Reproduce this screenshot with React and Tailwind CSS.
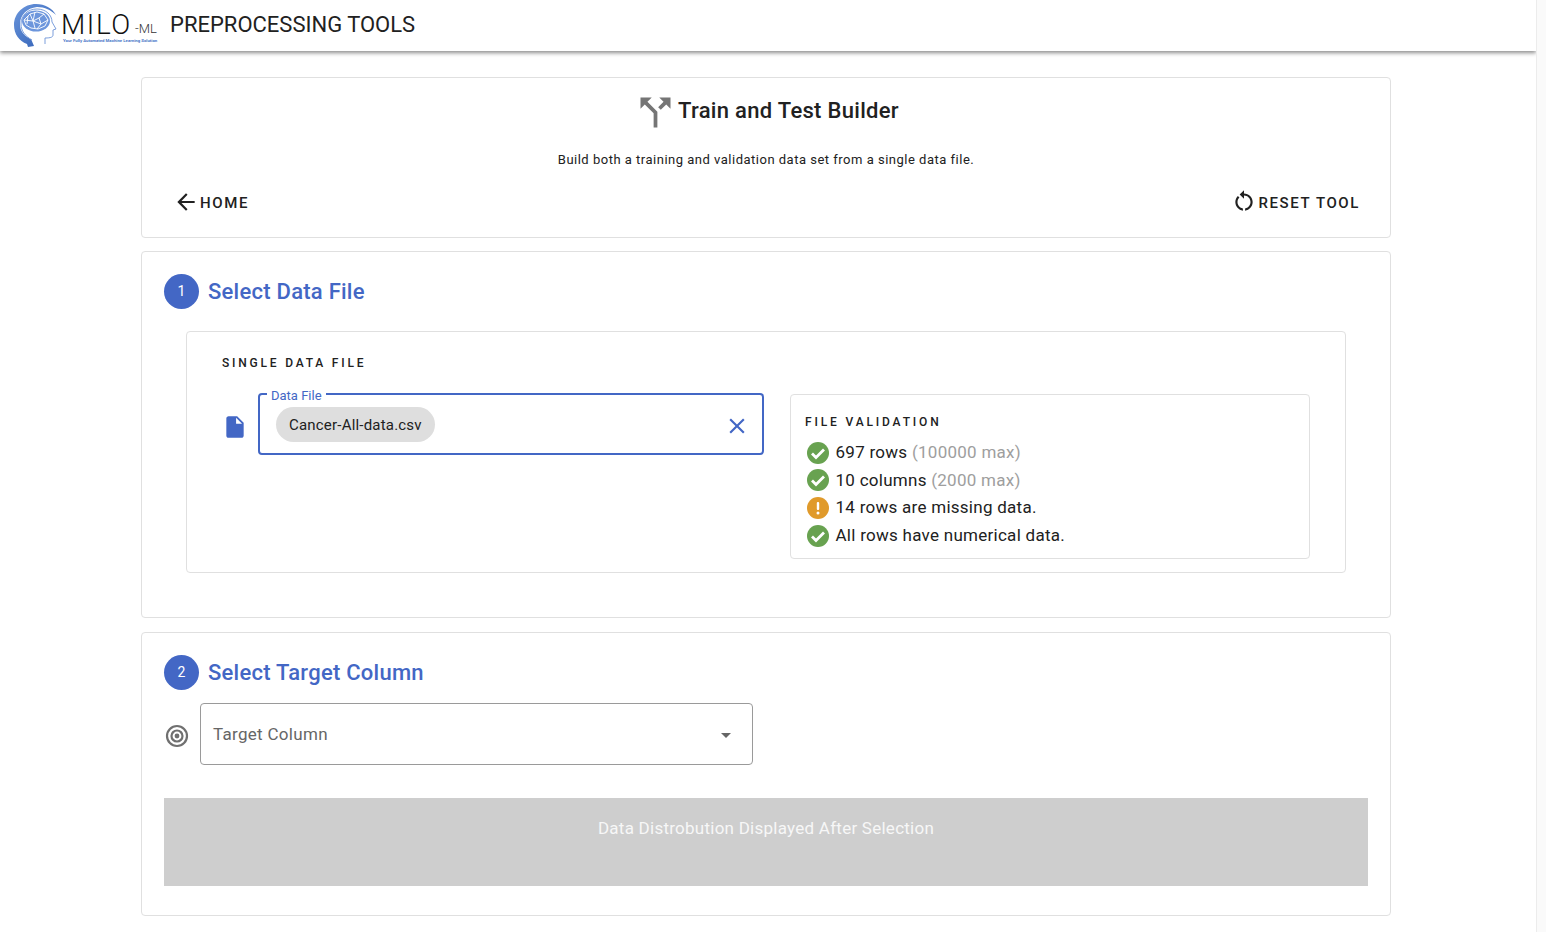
function Icon({ d, className, fill = "currentColor" }) {
    return (
        <svg viewBox="0 0 24 24" className={className} fill={fill}>
            <path d={d} />
        </svg>
    );
}

function Logo() {
    return (
        <div className="relative w-[146px] h-[50px] shrink-0">
            <svg viewBox="0 0 44 44" className="absolute left-[1px] top-[3px] w-[44px] h-[44px]">
                <defs>
                    <linearGradient id="logoBlue" x1="0" y1="0" x2="1" y2="1">
                        <stop offset="0" stopColor="#6c97dd" />
                        <stop offset="1" stopColor="#2c5cb2" />
                    </linearGradient>
                </defs>
                <path
                    d="M42 11C38 4 31 0 22 0 10 0 0 9 0 21c0 9 5 16 13 19l1 3 6-1-3-7C10 32 6 27 6 20 6 11 13 4 23 3c8 0 14 3 19 8z"
                    fill="url(#logoBlue)"
                />
                <path
                    d="M18 36C11 32 7 27 7 20 7 11 14 5 23 5c9 0 15 6 15 13l4 7-3 1 0 5c0 2-2 3-8 3l0 6"
                    fill="#ffffff"
                    stroke="#6d94d8"
                    strokeWidth="0.9"
                />
                <ellipse cx="22" cy="17" rx="14" ry="10.5" fill="#6d96dc" />
                <path
                    d="M10 16l6-6 7-2 7 2 4 6-3 6-7 3-7-1-5-3zM16 10l3 7 6-3 5-4M10 16l9 1 2 7M25 14l2 6 7-4M19 17l8 3-4 5M14 12l-1 8M21 8l-2 9"
                    fill="none"
                    stroke="#ffffff"
                    strokeWidth="0.9"
                />
            </svg>
            <span className="absolute left-[48px] top-[6px] text-[28px] leading-[36px] tracking-[1.6px] text-[#111] font-light">
                MILO
            </span>
            <span className="absolute left-[122px] top-[20px] text-[13px] leading-[16px] text-[#333] font-light whitespace-nowrap">
                -ML
            </span>
            <span className="absolute left-[50px] top-[38px] text-[4.3px] leading-[4px] font-bold text-[#4a78c8] whitespace-nowrap">
                Your Fully Automated Machine Learning Solution
            </span>
        </div>
    );
}

function StepTitle({ number, children }) {
    return (
        <div className="flex items-center gap-[9px]">
            <div className="flex h-[35px] w-[35px] items-center justify-center rounded-full bg-[#4367c5] text-[14px] text-white">
                {number}
            </div>
            <h2 className="h-[36px] pt-[2px] text-[22px] font-medium leading-[34px] tracking-[0.25px] text-[#4367c5]">
                {children}
            </h2>
        </div>
    );
}

function CheckMark({ warn }) {
    if (warn) {
        return (
            <svg viewBox="0 0 22 22" className="h-[22px] w-[22px] shrink-0">
                <circle cx="11" cy="11" r="11" fill="#e09a2b" />
                <rect x="9.8" y="5" width="2.4" height="8" rx="1" fill="#fff" />
                <circle cx="11" cy="16" r="1.5" fill="#fff" />
            </svg>
        );
    }
    return (
        <svg viewBox="0 0 22 22" className="h-[22px] w-[22px] shrink-0">
            <circle cx="11" cy="11" r="11" fill="#68a250" />
            <path d="M5 11.5l4 4 8-8" fill="none" stroke="#fff" strokeWidth="2.8" />
        </svg>
    );
}

const validations = [
    { text: "697 rows", extra: "(100000 max)" },
    { text: "10 columns", extra: "(2000 max)" },
    { text: "14 rows are missing data.", warn: true },
    { text: "All rows have numerical data." },
];

export default function App() {
    return (
        <div className="flex h-[932px] overflow-hidden bg-white font-['Roboto',sans-serif] text-[#212121]">
            <div className="w-[1536px] shrink-0">
                {/* App bar */}
                <header className="flex h-[51px] items-center pl-[13px] shadow-[0_2px_4px_rgba(0,0,0,0.45)]">
                    <Logo />
                    <h1 className="mb-[2px] ml-[11px] text-[22px] leading-[48px] text-[#212121]">PREPROCESSING TOOLS</h1>
                </header>

                <main className="ml-[141px] mt-[26px] flex w-[1250px] flex-col">
                    {/* Title card */}
                    <section className="h-[161px] rounded-[4px] border border-[#e0e0e0] px-[20px]">
                        <div className="mt-[12px] flex items-center justify-center">
                            <Icon
                                className="h-[45px] w-[45px] text-[#757575]"
                                d="M14 4l2.29 2.29-2.88 2.88 1.42 1.42 2.88-2.88L20 10V4zm-4 0H4v6l2.29-2.29 4.71 4.7V20h2v-8.41l-5.29-5.3z"
                            />
                            <span className="mb-[4px] text-[22px] font-medium leading-[32px] tracking-[0.3px]">
                                Train and Test Builder
                            </span>
                        </div>
                        <p className="mt-[15px] text-center text-[13px] leading-[20px] tracking-[0.5px]">
                            Build both a training and validation data set from a single data file.
                        </p>
                        <div className="mt-[21px] flex items-center justify-between pl-[11px] pr-[10px]">
                            <button className="flex items-center gap-[1px] text-[15px] font-medium tracking-[1.6px]">
                                <Icon
                                    className="-mt-[2px] h-[26px] w-[26px]"
                                    d="M20 11H7.83l5.59-5.59L12 4l-8 8 8 8 1.41-1.41L7.83 13H20v-2z"
                                />
                                HOME
                            </button>
                            <button className="flex items-center gap-[2px] text-[15px] font-medium tracking-[1.6px]">
                                <Icon
                                    className="-mt-[4px] h-[26px] w-[26px]"
                                    d="M12 5V2L8 6l4 4V7c3.31 0 6 2.69 6 6 0 2.97-2.17 5.43-5 5.91v2.02c3.95-.49 7-3.85 7-7.93 0-4.42-3.58-8-8-8zm-6 8c0-1.65.67-3.15 1.76-4.24L6.34 7.34C4.9 8.79 4 10.79 4 13c0 4.08 3.05 7.44 7 7.93v-2.02c-2.83-.48-5-2.94-5-5.91z"
                                />
                                RESET TOOL
                            </button>
                        </div>
                    </section>

                    {/* Step 1 */}
                    <section className="mt-[13px] h-[367px] rounded-[4px] border border-[#e0e0e0] px-[22px] pt-[21px]">
                        <StepTitle number={1}>Select Data File</StepTitle>
                        <div className="ml-[22px] mt-[22px] h-[242px] w-[1160px] rounded-[4px] border border-[#e0e0e0] px-[35px] pt-[21px]">
                            <h3 className="text-[12px] font-medium leading-[20px] tracking-[2.8px]">SINGLE DATA FILE</h3>
                            <div className="mt-[21px] flex items-start">
                                <Icon
                                    className="mt-[20px] h-[26px] w-[26px] shrink-0 text-[#4367c5]"
                                    d="M6 2c-1.1 0-1.99.9-1.99 2L4 20c0 1.1.89 2 1.99 2H18c1.1 0 2-.9 2-2V8l-6-6H6zm7 7V3.5L18.5 9H13z"
                                />
                                <div className="relative ml-[10px] -mt-px flex h-[62px] w-[506px] shrink-0 items-center justify-between rounded-[4px] border-2 border-[#4367c5] pl-[16px] pr-[12px]">
                                    <span className="absolute left-[7px] top-[-6px] bg-white px-[4px] text-[13px] leading-[14px] text-[#4367c5]">
                                        Data File
                                    </span>
                                    <span className="mt-[1px] flex h-[35px] items-center rounded-full bg-[#dedede] px-[13px] pt-[1px] text-[15px] tracking-[0.2px]">
                                        Cancer-All-data.csv
                                    </span>
                                    <Icon
                                        className="mt-[3px] h-[26px] w-[26px] text-[#4367c5]"
                                        d="M19 6.41L17.59 5 12 10.59 6.41 5 5 6.41 10.59 12 5 17.59 6.41 19 12 13.41 17.59 19 19 17.59 13.41 12z"
                                    />
                                </div>
                                <div className="ml-[26px] h-[165px] w-[520px] rounded-[4px] border border-[#e0e0e0] pl-[14px] pt-[17px]">
                                    <h4 className="text-[12px] font-medium leading-[20px] tracking-[2.85px]">FILE VALIDATION</h4>
                                    <ul className="mt-[7px] flex flex-col">
                                        {validations.map((item) => (
                                            <li
                                                key={item.text}
                                                className="flex h-[27.6px] items-center gap-[6.5px] pl-[2px] text-[17px] tracking-[0.27px]"
                                            >
                                                <CheckMark warn={item.warn} />
                                                <span>
                                                    {item.text}
                                                    {item.extra && <span className="text-[#9e9e9e]"> {item.extra}</span>}
                                                </span>
                                            </li>
                                        ))}
                                    </ul>
                                </div>
                            </div>
                        </div>
                    </section>

                    {/* Step 2 */}
                    <section className="mt-[14px] h-[284px] rounded-[4px] border border-[#e0e0e0] px-[22px] pt-[21px]">
                        <StepTitle number={2}>Select Target Column</StepTitle>
                        <div className="mt-[13px] flex items-center">
                            <svg
                                viewBox="0 0 24 24"
                                className="ml-[1px] mt-[4px] h-[24px] w-[24px] text-[#707070]"
                                fill="none"
                                stroke="currentColor"
                            >
                                <circle cx="12" cy="12" r="10" strokeWidth="2.2" />
                                <circle cx="12" cy="12" r="5.5" strokeWidth="2.2" />
                                <circle cx="12" cy="12" r="2.4" fill="currentColor" stroke="none" />
                            </svg>
                            <div className="ml-[11px] flex h-[62px] w-[553px] items-center justify-between rounded-[4px] border border-[#9a9a9a] pl-[12px] pr-[14px]">
                                <span className="mt-[2px] text-[17px] tracking-[0.3px] text-[#666]">Target Column</span>
                                <Icon className="mt-[2px] h-[24px] w-[24px] text-[#666]" d="M7 10l5 5 5-5z" />
                            </div>
                        </div>
                        <div className="mt-[33px] h-[88px] bg-[#cecece] pt-[18px] text-center text-[17px] leading-[24px] tracking-[0.25px] text-[#f7f7f7]">
                            Data Distrobution Displayed After Selection
                        </div>
                    </section>
                </main>
            </div>
            <div className="w-[10px] shrink-0 border-l border-[#ececec] bg-[#fafafa]" />
        </div>
    );
}
